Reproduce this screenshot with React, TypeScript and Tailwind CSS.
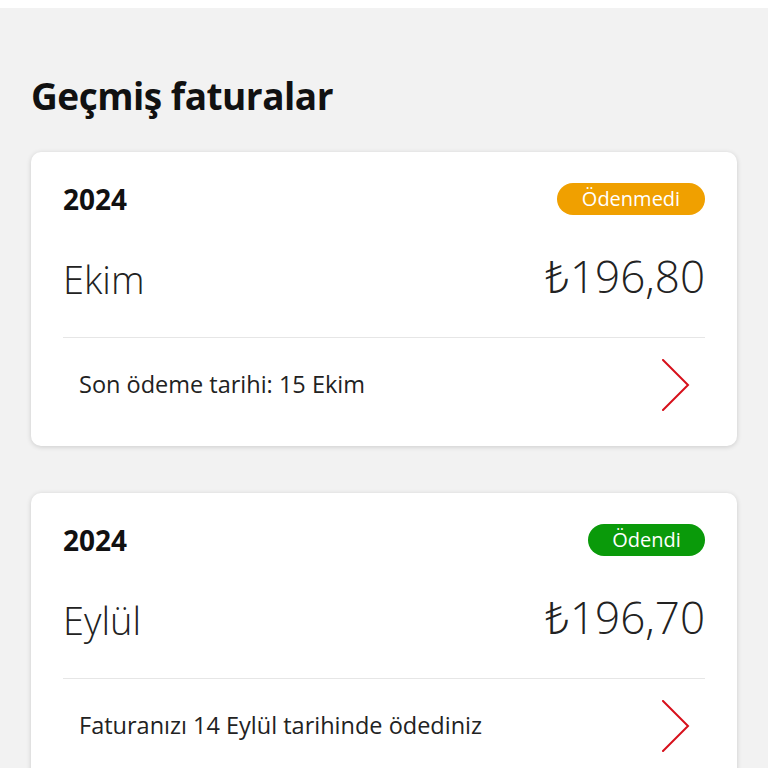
import React from 'react';

type Bill = {
  year: string;
  month: string;
  amount: string;
  status: 'paid' | 'unpaid';
  note: string;
};

const bills: Bill[] = [
  { year: '2024', month: 'Ekim', amount: '₺196,80', status: 'unpaid', note: 'Son ödeme tarihi: 15 Ekim' },
  { year: '2024', month: 'Eylül', amount: '₺196,70', status: 'paid', note: 'Faturanızı 14 Eylül tarihinde ödediniz' },
];

function Chevron() {
  return (
    <svg width="30" height="52" viewBox="0 0 30 52" fill="none" className="shrink-0">
      <path d="M2 1 L27 26 L2 51" stroke="#d7101b" strokeWidth="2" strokeLinecap="round" strokeLinejoin="miter" />
    </svg>
  );
}

function BillCard({ bill }: { bill: Bill }) {
  const paid = bill.status === 'paid';
  return (
    <div className="bg-white rounded-[10px] shadow-[0_1px_5px_rgba(0,0,0,0.16)] px-[32px] pt-[31px] pb-[14px]">
      <div className="flex items-center justify-between h-[32px]">
        <span className="text-[28px] font-bold text-[#111] leading-none">{bill.year}</span>
        {paid ? (
          <span className="h-[32px] w-[117px] rounded-full bg-[#0a9a0a] text-white text-[20px] leading-none flex items-center justify-center">
            Ödendi
          </span>
        ) : (
          <span className="h-[32px] w-[148px] rounded-full bg-[#f0a000] text-white text-[20px] leading-none flex items-center justify-center">
            Ödenmedi
          </span>
        )}
      </div>
      <div className="flex items-center justify-between h-[123px] border-b border-[#e6e6e6]">
        <span className="text-[38px] font-light text-[#222] leading-none pt-[6px]">{bill.month}</span>
        <span className="text-[44px] font-light text-[#222] leading-none">{bill.amount}</span>
      </div>
      <div className="flex items-center justify-between h-[94px] pl-[16px] pr-[14px]">
        <span className="text-[23.5px] text-[#222]">{bill.note}</span>
        <Chevron />
      </div>
    </div>
  );
}

export default function App() {
  return (
    <div className="w-[768px] h-[768px] overflow-hidden bg-white" style={{ fontFamily: '"Open Sans", "Noto Sans", sans-serif' }}>
      <div className="mt-[8px] bg-[#f2f2f2] min-h-[760px] px-[31px]">
        <h1 className="pt-[69px] pb-[38px] text-[37px] font-bold text-[#111] leading-none tracking-[-0.5px]">
          Geçmiş faturalar
        </h1>
        <div className="flex flex-col gap-[47px]">
          {bills.map((b) => (
            <BillCard key={b.month} bill={b} />
          ))}
        </div>
      </div>
    </div>
  );
}
